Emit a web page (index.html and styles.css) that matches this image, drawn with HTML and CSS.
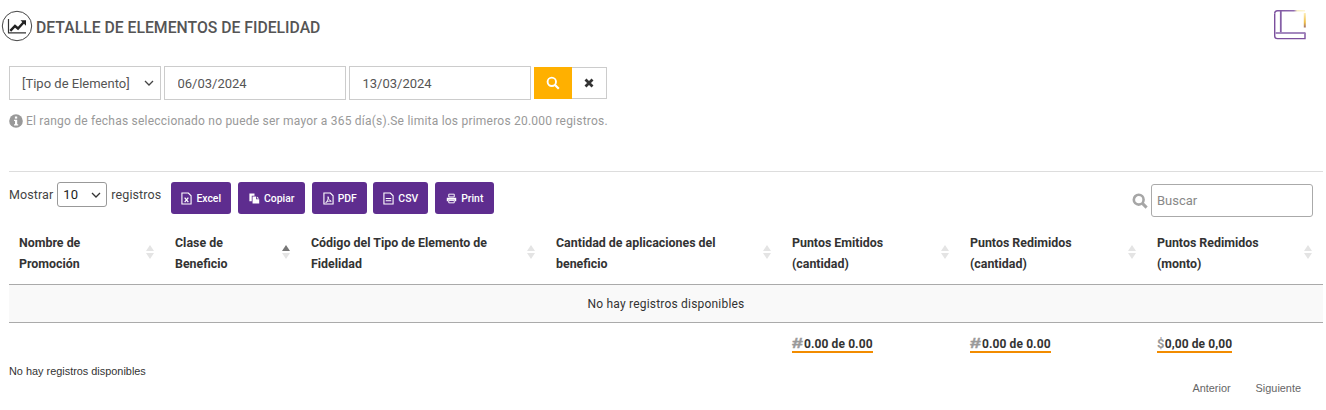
FILE: index.html
```html
<!DOCTYPE html>
<html lang="es">
<head>
<meta charset="utf-8">
<title>Detalle de elementos de fidelidad</title>
<link rel="stylesheet" href="styles.css">
</head>
<body>
<header class="page-head">
  <div class="title-wrap">
    <svg class="title-icon" viewBox="0 0 32 32" aria-hidden="true">
      <circle cx="16" cy="16" r="14.7" fill="none" stroke="#444" stroke-width="1"/>
      <path d="M7.5 9V22.8H25" fill="none" stroke="#333" stroke-width="1.2"/>
      <path d="M9.3 20.8L14 16L17 18.5L22.5 12.5" fill="none" stroke="#222" stroke-width="2.4"/>
      <path d="M19.5 10.2H25V15.7Z" fill="#222"/>
    </svg>
    <h1 class="title">DETALLE DE ELEMENTOS DE FIDELIDAD</h1>
  </div>
  <svg class="book-icon" viewBox="0 0 32 30" aria-hidden="true">
    <defs>
      <linearGradient id="bookTop" gradientUnits="userSpaceOnUse" x1="0" y1="0" x2="32" y2="0">
        <stop offset="0" stop-color="#7b4f9d"/>
        <stop offset=".62" stop-color="#8f6bb0"/>
        <stop offset=".72" stop-color="#f7eec0"/>
        <stop offset="1" stop-color="#fff6d8"/>
      </linearGradient>
      <linearGradient id="bookGlow" gradientUnits="userSpaceOnUse" x1="0" y1="2" x2="0" y2="18">
        <stop offset="0" stop-color="#fff3c4"/>
        <stop offset=".65" stop-color="#efbd45"/>
        <stop offset="1" stop-color="#9a6a6e"/>
      </linearGradient>
    </defs>
    <path d="M0.7 3.5Q0.7 0.7 3.5 0.7H31" fill="none" stroke="url(#bookTop)" stroke-width="1.4"/>
    <path d="M0.7 3.5V26Q0.7 28.6 3.5 28.6H31V22.6" fill="none" stroke="#7b4f9d" stroke-width="1.4"/>
    <path d="M6.8 1V22.6" fill="none" stroke="#855fa6" stroke-width="1.8"/>
    <path d="M1.5 23H31" fill="none" stroke="#9a7cb8" stroke-width="1.8"/>
    <path d="M30.8 3V17.5" fill="none" stroke="url(#bookGlow)" stroke-width="2"/>
  </svg>
</header>

<form class="filters">
  <div class="fake-select">[Tipo de Elemento]
    <svg class="chev" viewBox="0 0 10 6" aria-hidden="true"><path d="M1 1L5 5L9 1" fill="none" stroke="#444" stroke-width="1.3"/></svg>
  </div>
  <input class="date-input" type="text" value="06/03/2024">
  <input class="date-input" type="text" value="13/03/2024">
  <div class="filter-btns">
    <button class="btn-search" type="button" aria-label="Buscar">
      <svg viewBox="0 0 14 14" aria-hidden="true"><circle cx="5.8" cy="5.8" r="4.2" fill="none" stroke="#fff" stroke-width="1.9"/><path d="M8.8 8.8L12.8 12.8" stroke="#fff" stroke-width="2.2"/></svg>
    </button>
    <button class="btn-clear" type="button" aria-label="Limpiar">
      <svg viewBox="0 0 10 10" aria-hidden="true"><path d="M1.5 1.5L8.5 8.5M8.5 1.5L1.5 8.5" stroke="#333" stroke-width="2.8"/></svg>
    </button>
  </div>
</form>

<p class="hint">
  <svg class="hint-icon" viewBox="0 0 14 14" aria-hidden="true"><circle cx="7" cy="7" r="6.8" fill="#999"/><rect x="5.9" y="2.5" width="2.3" height="2.1" fill="#fff"/><path d="M5 5.8H8.2V10.2H9.2V11.4H5V10.2H6V7H5Z" fill="#fff"/></svg>El rango de fechas seleccionado no puede ser mayor a 365 día(s).Se limita los primeros 20.000 registros.
</p>

<hr class="divider">

<div class="controls">
  <div class="controls-left">
    <div class="length">Mostrar
      <span class="length-select">10
        <svg class="chev" viewBox="0 0 10 6" aria-hidden="true"><path d="M1 1L5 5L9 1" fill="none" stroke="#333" stroke-width="1.3"/></svg>
      </span>
      registros</div>
    <div class="exports">
      <button class="btn-x b-excel" type="button"><svg viewBox="0 0 12 14" aria-hidden="true"><path d="M1 1H8L11 4V13H1Z" fill="none" stroke="#fff" stroke-width="1.2"/><path d="M4 6L8 11M8 6L4 11" stroke="#fff" stroke-width="1.4"/></svg>Excel</button>
      <button class="btn-x b-copy" type="button"><svg viewBox="0 0 14 14" aria-hidden="true"><path d="M0.5 0.5H7V3.5H3.5V10.5H0.5Z" fill="#fff"/><path d="M4.5 4.5H9V8H13V13.5H4.5Z" fill="#fff"/><path d="M10 4.5L13 7H10Z" fill="#fff"/></svg>Copiar</button>
      <button class="btn-x b-pdf" type="button"><svg viewBox="0 0 12 14" aria-hidden="true"><path d="M1 1H8L11 4V13H1Z" fill="none" stroke="#fff" stroke-width="1.2"/><path d="M3 11.5C5 10 6 7 5.5 5C6 7.5 7 9.5 9 10C7 9.5 5 10 3 11.5Z" fill="none" stroke="#fff" stroke-width="1"/></svg>PDF</button>
      <button class="btn-x b-csv" type="button"><svg viewBox="0 0 12 14" aria-hidden="true"><path d="M1 1H8L11 4V13H1Z" fill="none" stroke="#fff" stroke-width="1.2"/><path d="M3 7H9M3 9.5H9" stroke="#fff" stroke-width="1.2"/></svg>CSV</button>
      <button class="btn-x b-print" type="button"><svg viewBox="0 0 14 14" aria-hidden="true"><path d="M3.5 1.5H10.5V5H3.5Z" fill="none" stroke="#fff" stroke-width="1.2"/><path d="M1 6H13V10.5H11V8.5H3V10.5H1Z" fill="#fff"/><path d="M3.5 9.5H10.5V12.5H3.5Z" fill="none" stroke="#fff" stroke-width="1.2"/></svg>Print</button>
    </div>
  </div>
  <div class="search">
    <svg class="search-icon" viewBox="0 0 16 16" aria-hidden="true"><circle cx="6.7" cy="6.7" r="4.9" fill="none" stroke="#a6a6a6" stroke-width="2.6"/><path d="M10.4 10.4L14.6 14.6" stroke="#a6a6a6" stroke-width="3"/></svg>
    <input class="search-input" type="text" placeholder="Buscar">
  </div>
</div>

<table class="grid">
  <colgroup>
    <col class="c1"><col class="c2"><col class="c3"><col class="c4"><col class="c5"><col class="c6"><col class="c7">
  </colgroup>
  <thead>
    <tr>
      <th>Nombre de Promoción<span class="sort"><i class="up"></i><i class="down"></i></span></th>
      <th>Clase de Beneficio<span class="sort"><i class="up active"></i><i class="down"></i></span></th>
      <th>Código del Tipo de Elemento de Fidelidad<span class="sort"><i class="up"></i><i class="down"></i></span></th>
      <th>Cantidad de aplicaciones del beneficio<span class="sort"><i class="up"></i><i class="down"></i></span></th>
      <th>Puntos Emitidos (cantidad)<span class="sort"><i class="up"></i><i class="down"></i></span></th>
      <th>Puntos Redimidos (cantidad)<span class="sort"><i class="up"></i><i class="down"></i></span></th>
      <th>Puntos Redimidos (monto)<span class="sort"><i class="up"></i><i class="down"></i></span></th>
    </tr>
  </thead>
  <tbody>
    <tr><td class="empty" colspan="7">No hay registros disponibles</td></tr>
  </tbody>
  <tfoot>
    <tr>
      <td></td><td></td><td></td><td></td>
      <td><span class="total"><b class="sym hash">#</b>0.00 de 0.00</span></td>
      <td><span class="total"><b class="sym hash">#</b>0.00 de 0.00</span></td>
      <td><span class="total"><b class="sym">$</b>0,00 de 0,00</span></td>
    </tr>
  </tfoot>
</table>

<div class="table-info">No hay registros disponibles</div>
<nav class="pager"><a>Anterior</a><a>Siguiente</a></nav>
</body>
</html>
```
FILE: styles.css
```css
* { box-sizing: border-box; }
html, body { margin: 0; padding: 0; }
body {
  width: 1326px;
  height: 410px;
  overflow: hidden;
  background: #fff;
  font-family: Roboto, "Liberation Sans", sans-serif;
  font-size: 12px;
  color: #333;
}
.page-head {
  display: flex;
  justify-content: space-between;
  align-items: flex-start;
  height: 66px;
  padding: 10px 20px 0 1px;
}
.title-wrap { display: flex; align-items: center; gap: 3px; }
.title-icon { width: 32px; height: 32px; }
.title {
  margin: 2px 0 0;
  font-size: 15.75px;
  font-weight: 500;
  color: #555;
}
.book-icon { width: 32px; height: 30px; }

.filters { display: flex; align-items: center; gap: 3px; padding-left: 9px; }
.fake-select, .date-input {
  height: 34px;
  border: 1px solid #ccc;
  background: #fff;
  font: 13px Roboto, sans-serif;
  color: #555;
}
.fake-select {
  width: 152px;
  display: flex;
  align-items: center;
  justify-content: space-between;
  padding: 0 6px 0 12px;
}
.chev { width: 10px; height: 6px; }
.date-input { width: 182px; padding: 0 12.5px; outline: none; }
.filter-btns { display: flex; }
.btn-search, .btn-clear {
  height: 32px;
  padding: 0;
  display: flex;
  align-items: center;
  justify-content: center;
}
.btn-search { width: 38px; background: #ffb000; border: 0; }
.btn-search svg { width: 14px; height: 14px; }
.btn-clear { width: 35px; background: #fff; border: 1px solid #ccc; border-left: 0; }
.btn-clear svg { width: 10px; height: 10px; }

.hint {
  margin: 12px 0 0;
  padding-left: 9px;
  height: 17px;
  font-size: 12px;
  line-height: 18px;
  letter-spacing: .22px;
  color: #999;
  display: flex;
  align-items: center;
}
.hint-icon { width: 14px; height: 14px; margin-right: 3px; }

.divider { margin: 42px 3px 0 9px; border: 0; border-top: 1px solid #ddd; }

.controls {
  display: flex;
  justify-content: space-between;
  align-items: flex-start;
  padding: 10px 13px 0 9px;
  height: 54px;
}
.controls-left { display: flex; gap: 10px; }
.length { display: flex; align-items: center; gap: 4px; height: 25px; font-size: 12.5px; color: #444; letter-spacing: .1px; }
.length-select {
  width: 50px;
  height: 25px;
  border: 1px solid #999;
  border-radius: 3px;
  display: flex;
  align-items: center;
  justify-content: space-between;
  padding: 0 5px;
  font-size: 13px;
  color: #222;
}
.exports { display: flex; gap: 7px; }
.btn-x {
  height: 32px;
  padding: 0;
  border: 0;
  border-radius: 3px;
  background: #5e2d8f;
  color: #fff;
  font: 500 10.4px Roboto, sans-serif;
  display: flex;
  align-items: center;
  justify-content: center;
  gap: 4px;
}
.btn-x svg { width: 11px; height: 13px; }
.b-excel { width: 60px; }
.b-copy { width: 67px; }
.b-pdf { width: 55px; }
.b-csv { width: 55px; margin-left: -1px; }
.b-print { width: 59px; }
.search { display: flex; align-items: center; gap: 3px; margin-top: 2px; }
.search-icon { width: 16px; height: 16px; }
.search-input {
  width: 162px;
  height: 33px;
  border: 1px solid #aaa;
  border-radius: 3px;
  padding: 0 5px;
  font: 13px Roboto, sans-serif;
  outline: none;
}
.search-input::placeholder { color: #888; }

.grid {
  width: 1314px;
  margin-left: 9px;
  border-collapse: collapse;
  table-layout: fixed;
}
.c1 { width: 156px; } .c2 { width: 136px; } .c3 { width: 245px; } .c4 { width: 236px; }
.c5 { width: 178px; } .c6 { width: 187px; } .c7 { width: 176px; }
.grid th {
  position: relative;
  height: 58px;
  padding: 4px 30px 7px 10px;
  border-bottom: 1px solid #aaa;
  text-align: left;
  vertical-align: middle;
  font-size: 12.4px;
  font-weight: 700;
  line-height: 21px;
  color: #333;
}
.sort {
  position: absolute;
  right: 11px;
  top: 19px;
  display: flex;
  flex-direction: column;
  gap: 2px;
}
.sort i { display: block; width: 0; height: 0; border-left: 4px solid transparent; border-right: 4px solid transparent; }
.sort .up { border-bottom: 6px solid #e4e4e4; }
.sort .up.active { border-bottom-color: #777; }
.sort .down { border-top: 6px solid #e4e4e4; }
.empty {
  height: 38px;
  padding-top: 2px;
  background: #f9f9f9;
  border-bottom: 1px solid #aaa;
  text-align: center;
  font-size: 12px;
  letter-spacing: .2px;
  color: #333;
}
.grid tfoot td { padding: 14px 10px 0; height: 34px; vertical-align: top; }
.total {
  display: inline-block;
  border-bottom: 2px solid #f28c00;
  font-weight: 700;
  font-size: 12px;
  line-height: 14px;
  letter-spacing: .1px;
  color: #333;
}
.sym { color: #999; font-size: 13px; font-weight: 700; line-height: 0; letter-spacing: .2px; }
.hash {
  display: inline-block;
  width: 12px;
  font: 700 14px "Liberation Sans", Arial, sans-serif;
  line-height: 0;
  letter-spacing: 0;
  -webkit-text-stroke: .4px #999;
  transform: scaleX(1.4);
  transform-origin: left center;
}
.table-info { padding: 9px 0 0 9px; font: 10.9px "Liberation Sans", Arial, sans-serif; color: #333; }
.pager {
  display: flex;
  justify-content: flex-end;
  gap: 25px;
  padding: 5px 25px 0 0;
  font: 10.9px "Liberation Sans", Arial, sans-serif;
  color: #666;
}
```
